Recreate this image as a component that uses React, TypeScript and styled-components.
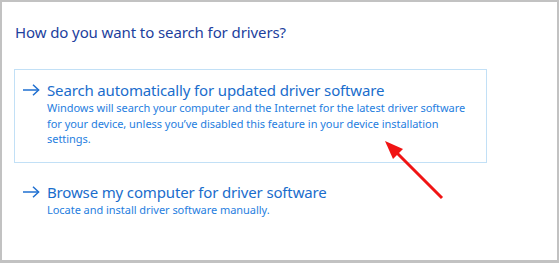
import React from "react";
import styled, { createGlobalStyle } from "styled-components";

const GlobalStyle = createGlobalStyle`
  html, body {
    margin: 0;
    padding: 0;
    background: #c2c2c2;
  }
  body {
    font-family: "Noto Sans", "Open Sans", sans-serif;
  }
`;

const Frame = styled.div`
  position: relative;
  margin: 2px 2px 3px 2px;
  height: 258px;
  background: #ffffff;
  box-sizing: border-box;
  padding: 19px 0 0 12px;
  overflow: hidden;
`;

const Heading = styled.h1`
  margin: 0 0 0 1px;
  font-size: 15px;
  font-weight: 400;
  line-height: 22px;
  letter-spacing: -0.1px;
  color: #1d3f9e;
`;

const OptionList = styled.div`
  display: flex;
  flex-direction: column;
  gap: 8px;
  width: 473px;
  margin-top: 26px;
`;

const Option = styled.div<{ $active?: boolean }>`
  display: grid;
  grid-template-columns: 18px 1fr;
  column-gap: 7px;
  padding: 10px 8px 15px 7px;
  border: 1px solid ${(p) => (p.$active ? "#c2e0f6" : "transparent")};
`;

const ArrowCell = styled.div`
  height: 20px;
  display: flex;
  align-items: center;
  color: #1f6fd0;
`;

const Texts = styled.div`
  display: flex;
  flex-direction: column;
  max-width: 431px;
`;

const Title = styled.div`
  font-size: 15px;
  line-height: 20px;
  letter-spacing: -0.15px;
  color: #1a6dcc;
`;

const Description = styled.div`
  font-size: 11px;
  line-height: 15.5px;
  letter-spacing: -0.04px;
  color: #1f7ee0;
`;

const Annotation = styled.svg`
  position: absolute;
  left: 0;
  top: 0;
  pointer-events: none;
`;

const Arrow = () => (
  <svg width="18" height="12" viewBox="0 0 18 12" fill="none">
    <path d="M1 6 H16.5" stroke="currentColor" strokeWidth="1.5" />
    <path d="M11 0.8 L16.6 6 L11 11.2" stroke="currentColor" strokeWidth="1.5" />
  </svg>
);

type Choice = { title: string; description: string; active?: boolean };

const choices: Choice[] = [
  {
    title: "Search automatically for updated driver software",
    description:
      "Windows will search your computer and the Internet for the latest driver software for your device, unless you\u2019ve disabled this feature in your device installation settings.",
    active: true,
  },
  {
    title: "Browse my computer for driver software",
    description: "Locate and install driver software manually.",
  },
];

export default function App() {
  return (
    <>
      <GlobalStyle />
      <Frame>
        <Heading>How do you want to search for drivers?</Heading>
        <OptionList>
          {choices.map((c) => (
            <Option key={c.title} $active={c.active}>
              <ArrowCell>
                <Arrow />
              </ArrowCell>
              <Texts>
                <Title>{c.title}</Title>
                <Description>{c.description}</Description>
              </Texts>
            </Option>
          ))}
        </OptionList>
        <Annotation width="555" height="258" viewBox="2 2 555 258">
          <line x1="442" y1="198" x2="396" y2="152" stroke="#f01414" strokeWidth="3" />
          <polygon points="385,141 403,149 393,159" fill="#f01414" />
        </Annotation>
      </Frame>
    </>
  );
}
